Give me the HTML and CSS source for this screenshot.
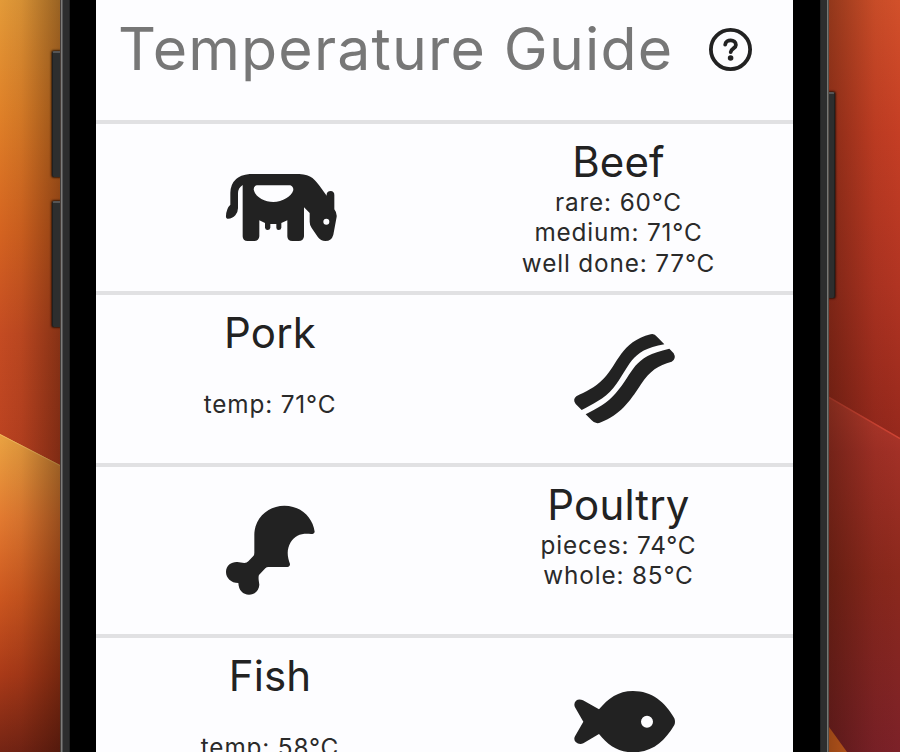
FILE: index.html
```
<!DOCTYPE html>
<html lang="en">
<head>
<meta charset="utf-8">
<title>Temperature Guide</title>
<link rel="stylesheet" href="styles.css">
</head>
<body>
<div class="stage">
  <div class="side side-left">
    <svg width="60" height="752" viewBox="0 0 60 752">
      <defs>
        <linearGradient id="l1" x1="0" y1="0" x2="0" y2="1"><stop offset="0" stop-color="#e39a38"/><stop offset=".25" stop-color="#df8028"/><stop offset=".5" stop-color="#d46320"/><stop offset=".72" stop-color="#c44b22"/><stop offset="1" stop-color="#b94020"/></linearGradient>
        <linearGradient id="l2" gradientUnits="userSpaceOnUse" x1="0" y1="440" x2="0" y2="752"><stop offset="0" stop-color="#e9a040"/><stop offset=".25" stop-color="#e27a30"/><stop offset=".5" stop-color="#cc571f"/><stop offset=".75" stop-color="#aa3a18"/><stop offset="1" stop-color="#742414"/></linearGradient>
        <linearGradient id="ls"><stop offset="0" stop-color="#200800" stop-opacity="0"/><stop offset=".35" stop-color="#200800" stop-opacity=".07"/><stop offset="1" stop-color="#200800" stop-opacity=".38"/></linearGradient>
      </defs>
      <rect width="60" height="465" fill="url(#l1)"/>
      <path d="M0 434L60 465V752H0Z" fill="url(#l2)"/>
      <path d="M0 434.500L60 465.500" stroke="#f2b95c" stroke-width="1"/>
      <rect width="60" height="752" fill="url(#ls)"/>
    </svg>
    <i class="key key-up"></i><i class="key key-down"></i>
  </div>
  <main class="phone">
    <div class="screen">
      <header class="top">
        <h1>Temperature Guide</h1>
        <svg class="help" width="44" height="44" viewBox="0 0 44 44" fill="none" stroke="#222" stroke-width="3.800" stroke-linecap="round">
          <circle cx="22.500" cy="22.500" r="19.600"/>
          <path d="M17.200 17.600C17.800 11.900 27.900 12 27.900 18C27.900 21.500 23 21.300 22.700 25.200"/>
          <circle cx="22.600" cy="31" r="2.800" fill="#222" stroke="none"/>
        </svg>
      </header>
      <section class="row">
        <div class="pic pic-cow"><svg width="135" height="95" viewBox="0 0 405 285"><path fill="#222" fill-rule="evenodd" d="M104 42H253C289 43 302 62 314 78L335 107V102Q337 93 347 93Q358 94 358 105V148Q366 158 365 170L355 224Q350 243 331 243Q317 243 309 232L290 204Q284 196 284 185V159L267 142V229Q266 243 251 243H232Q217 243 217 229V181L199 189V203Q198 210 191 210Q184 210 184 203V192H166V203Q165 210 158 210Q151 210 150 203V189L133 181V229Q132 243 117 243H98Q83 243 83 229V75Q69 84 69 100V145Q69 156 61 166Q51 177 37 176Q32 175 33 168Q34 145 46 134V98Q48 47 104 42ZM125 76Q116 78 116 88C120 111 149 126 175 126C202 126 231 109 235 90Q235 79 226 76ZM334 176A9 9 0 1 0 334 194A9 9 0 1 0 334 176Z"/></svg></div>
        <div class="info"><h2>Beef</h2><p>rare: 60°C</p><p>medium: 71°C</p><p>well done: 77°C</p></div>
      </section>
      <section class="row">
        <div class="info info-gap"><h2>Pork</h2><p>temp: 71°C</p></div>
        <div class="pic pic-bacon"><svg width="130" height="115" viewBox="0 0 390 345"><path fill="#222" d="M272 43Q283 40 291 50L313 73C207 90 210 143 160 204C132 238 96 253 65 270L47 252Q37 239 49 229C76 215 103 206 132 175C174 132 182 66 272 43Z"/><path fill="#222" d="M328 86L341 100Q350 116 335 125C294 137 270 151 243 193C206 250 180 284 123 307Q107 315 95 301L77 283C113 265 141 250 167 220C225 153 214 111 328 86Z"/></svg></div>
      </section>
      <section class="row">
        <div class="pic pic-leg"><svg width="115" height="110" viewBox="0 0 345 330"><path fill="#222" d="M118 122C117 72 157 32 208 32C258 32 293 67 299 110Q298 117 288 117C261 114 240 120 227 142C214 165 217 184 225 207Q225 215 217 216H160Q155 216 151 220L132 240Q130 243 131 255L133 269C132 286 119 299 102 299C84 299 71 286 70 264C48 264 33 249 33 231C33 210 50 200 67 201L88 204Q96 204 100 199L115 183Q118 180 118 173Z"/></svg></div>
        <div class="info"><h2>Poultry</h2><p>pieces: 74°C</p><p>whole: 85°C</p></div>
      </section>
      <section class="row">
        <div class="info info-gap"><h2>Fish</h2><p>temp: 58°C</p></div>
        <div class="pic pic-fish"><svg width="130" height="80" viewBox="0 0 390 240"><path fill="#222" fill-rule="evenodd" d="M117 88C145 55 174 33 219 33C275 33 316 66 343 115Q347 125 343 135C313 186 275 217 219 217C176 217 144 196 117 162L70 190Q57 195 47 186Q40 178 45 169L70 125L45 82Q40 70 48 62Q57 55 69 61ZM261 107A18 18 0 1 0 261 143A18 18 0 1 0 261 107Z"/></svg></div>
      </section>
    </div>
  </main>
  <div class="side side-right">
    <svg width="71" height="752" viewBox="0 0 71 752">
      <defs>
        <linearGradient id="r1" x1="0" y1="0" x2="0" y2="1"><stop offset="0" stop-color="#d2502a"/><stop offset=".3" stop-color="#c53e24"/><stop offset=".65" stop-color="#b13422"/><stop offset="1" stop-color="#96281c"/></linearGradient>
        <linearGradient id="r2" gradientUnits="userSpaceOnUse" x1="0" y1="400" x2="0" y2="752"><stop offset="0" stop-color="#b53b2c"/><stop offset=".15" stop-color="#a23026"/><stop offset=".5" stop-color="#8b281c"/><stop offset="1" stop-color="#7c2128"/></linearGradient>
        <linearGradient id="rs"><stop offset="0" stop-color="#200c00" stop-opacity=".36"/><stop offset=".65" stop-color="#200c00" stop-opacity=".06"/><stop offset="1" stop-color="#200c00" stop-opacity="0"/></linearGradient>
      </defs>
      <rect width="71" height="440" fill="url(#r1)"/>
      <path d="M0 397L71 438V752H0Z" fill="url(#r2)"/>
      <path d="M0 397.500L71 438.500" stroke="#cf4434" stroke-width="1.500"/>
      <path d="M0 727L18 752H0Z" fill="#dc6722"/>
      <rect width="71" height="752" fill="url(#rs)"/>
    </svg>
    <i class="key key-power"></i>
  </div>
</div>
</body>
</html>
```

FILE: styles.css
```
* { box-sizing: border-box; margin: 0; padding: 0; }
body { width: 900px; height: 752px; overflow: hidden; background: #000; color: #222; font-family: Inter, "Liberation Sans", sans-serif; }
svg { display: block; flex: none; }
.stage { display: grid; grid-template-columns: 60px 769px 71px; height: 752px; }
.side { position: relative; overflow: hidden; }
.key { position: absolute; background: #2d2e2e; border-top: 2px solid #555; box-shadow: 0 0 2px 1px rgba(25, 12, 5, .75); }
.key-up, .key-down { left: 52px; width: 8px; height: 126px; border-radius: 2px 0 0 2px; border-left: 1px solid #202020; }
.key-up { top: 51px; }
.key-down { top: 201px; }
.key-power { left: 0; top: 92px; width: 6px; height: 206px; border-radius: 0 2px 2px 0; border-right: 1px solid #202020; }
.phone { height: 752px; padding: 0 36px; background: linear-gradient(90deg, #453d38 0 1px, #7c7c7a 1px 2px, #555 2px 3px, #2d2e2e 3px 9px, #202121 9px 10px, #000 10px 760px, #242525 760px 761px, #2d2e2e 761px 767px, #777875 767px 768px, #55504b 768px 769px); }
.screen { width: 697px; height: 752px; overflow: hidden; background: #fdfdff; }
.top { display: flex; height: 119.500px; padding-left: 22px; }
h1 { width: 590px; padding-top: 12px; font-size: 59px; line-height: 74px; font-weight: 400; letter-spacing: 1.160px; color: #777; white-space: nowrap; }
.help { margin-top: 27px; }
.row { display: grid; grid-template-columns: 348px 349px; height: 171.500px; border-top: 4px solid #e1e1e3; }
.info { padding-top: 13px; text-align: center; }
h2 { height: 50px; font-size: 42px; line-height: 50px; font-weight: 400; letter-spacing: .150px; }
p { height: 30.500px; font-size: 24.300px; line-height: 30.500px; letter-spacing: .850px; color: #2a2a2a; }
.info-gap p { margin-top: 31px; }
.pic-cow { padding: 36.500px 0 0 119px; }
.pic-bacon { padding: 25px 0 0 116px; }
.pic-leg { padding: 28px 0 0 119px; }
.pic-fish { padding: 42px 0 0 116px; }
```
